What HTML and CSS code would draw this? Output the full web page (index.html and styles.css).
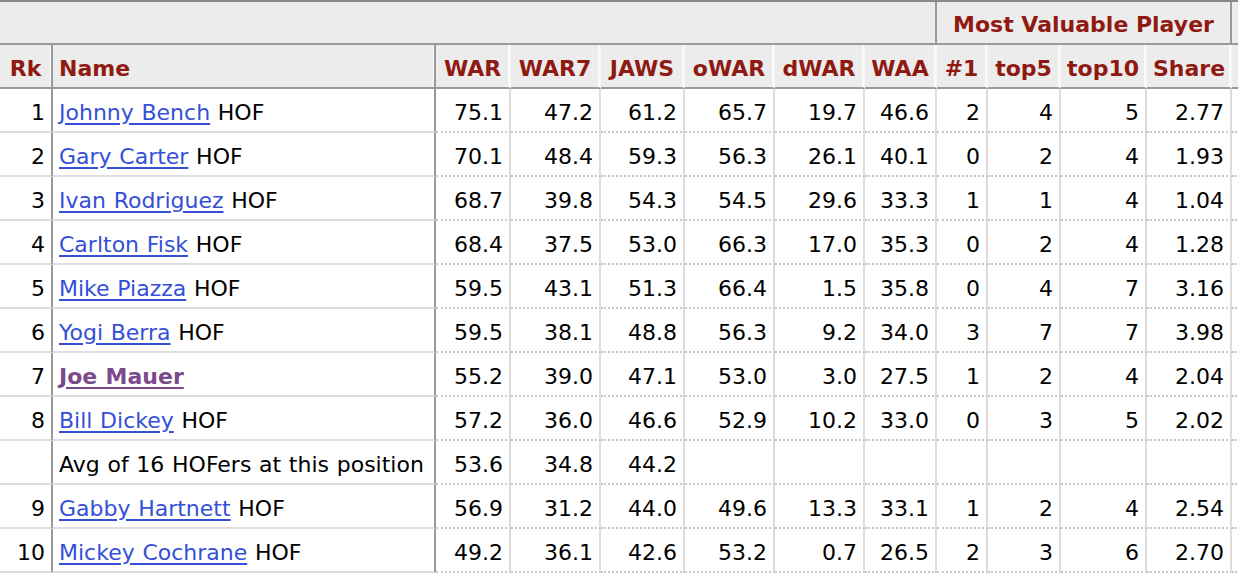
FILE: index.html
```html
<!DOCTYPE html>
<html lang="en">
<head>
<meta charset="utf-8">
<title>Catchers JAWS</title>
<link rel="stylesheet" href="styles.css">
</head>
<body>
<table class="stats">
  <colgroup>
    <col class="c-rk"><col class="c-name"><col class="c-war"><col class="c-war7"><col class="c-jaws"><col class="c-owar"><col class="c-dwar"><col class="c-waa"><col class="c-n1"><col class="c-top5"><col class="c-top10"><col class="c-share"><col class="c-more">
  </colgroup>
  <thead>
    <tr class="over">
      <th colspan="8" class="blank"></th>
      <th colspan="4" class="group">Most Valuable Player</th>
      <th class="tail"></th>
    </tr>
    <tr class="heads">
      <th class="left-sep">Rk</th>
      <th class="name left-sep">Name</th>
      <th>WAR</th>
      <th>WAR7</th>
      <th>JAWS</th>
      <th>oWAR</th>
      <th>dWAR</th>
      <th>WAA</th>
      <th>#1</th>
      <th>top5</th>
      <th>top10</th>
      <th>Share</th>
      <th class="tail"></th>
    </tr>
  </thead>
  <tbody>
    <tr><td class="rk">1</td><td class="player"><a href="#">Johnny Bench</a> HOF</td><td>75.1</td><td>47.2</td><td>61.2</td><td>65.7</td><td>19.7</td><td>46.6</td><td>2</td><td>4</td><td>5</td><td>2.77</td><td></td></tr>
    <tr><td class="rk">2</td><td class="player"><a href="#">Gary Carter</a> HOF</td><td>70.1</td><td>48.4</td><td>59.3</td><td>56.3</td><td>26.1</td><td>40.1</td><td>0</td><td>2</td><td>4</td><td>1.93</td><td></td></tr>
    <tr><td class="rk">3</td><td class="player"><a href="#">Ivan Rodriguez</a> HOF</td><td>68.7</td><td>39.8</td><td>54.3</td><td>54.5</td><td>29.6</td><td>33.3</td><td>1</td><td>1</td><td>4</td><td>1.04</td><td></td></tr>
    <tr><td class="rk">4</td><td class="player"><a href="#">Carlton Fisk</a> HOF</td><td>68.4</td><td>37.5</td><td>53.0</td><td>66.3</td><td>17.0</td><td>35.3</td><td>0</td><td>2</td><td>4</td><td>1.28</td><td></td></tr>
    <tr><td class="rk">5</td><td class="player"><a href="#">Mike Piazza</a> HOF</td><td>59.5</td><td>43.1</td><td>51.3</td><td>66.4</td><td>1.5</td><td>35.8</td><td>0</td><td>4</td><td>7</td><td>3.16</td><td></td></tr>
    <tr><td class="rk">6</td><td class="player"><a href="#">Yogi Berra</a> HOF</td><td>59.5</td><td>38.1</td><td>48.8</td><td>56.3</td><td>9.2</td><td>34.0</td><td>3</td><td>7</td><td>7</td><td>3.98</td><td></td></tr>
    <tr><td class="rk">7</td><td class="player"><a href="#" class="current">Joe Mauer</a></td><td>55.2</td><td>39.0</td><td>47.1</td><td>53.0</td><td>3.0</td><td>27.5</td><td>1</td><td>2</td><td>4</td><td>2.04</td><td></td></tr>
    <tr><td class="rk">8</td><td class="player"><a href="#">Bill Dickey</a> HOF</td><td>57.2</td><td>36.0</td><td>46.6</td><td>52.9</td><td>10.2</td><td>33.0</td><td>0</td><td>3</td><td>5</td><td>2.02</td><td></td></tr>
    <tr><td class="rk"></td><td class="player">Avg of 16 HOFers at this position</td><td>53.6</td><td>34.8</td><td>44.2</td><td></td><td></td><td></td><td></td><td></td><td></td><td></td><td></td></tr>
    <tr><td class="rk">9</td><td class="player"><a href="#">Gabby Hartnett</a> HOF</td><td>56.9</td><td>31.2</td><td>44.0</td><td>49.6</td><td>13.3</td><td>33.1</td><td>1</td><td>2</td><td>4</td><td>2.54</td><td></td></tr>
    <tr><td class="rk">10</td><td class="player"><a href="#">Mickey Cochrane</a> HOF</td><td>49.2</td><td>36.1</td><td>42.6</td><td>53.2</td><td>0.7</td><td>26.5</td><td>2</td><td>3</td><td>6</td><td>2.70</td><td></td></tr>
  </tbody>
</table>
</body>
</html>
```

FILE: styles.css
```css
html, body {
  margin: 0;
  padding: 0;
  overflow: hidden;
  background: #fff;
}

body {
  font-family: "DejaVu Sans", Verdana, sans-serif;
  font-size: 22px;
  color: #000;
}

.stats {
  border-collapse: separate;
  border-spacing: 0;
  table-layout: fixed;
  width: 1332px;
  border-top: 2px solid #888;
}

.c-rk { width: 53px; }
.c-name { width: 383px; }
.c-war { width: 75px; }
.c-war7 { width: 90px; }
.c-jaws { width: 84px; }
.c-owar { width: 90px; }
.c-dwar { width: 90px; }
.c-waa { width: 72px; }
.c-n1 { width: 51px; }
.c-top5 { width: 73px; }
.c-top10 { width: 86px; }
.c-share { width: 85px; }
.c-more { width: 100px; }

th, td {
  box-sizing: border-box;
  padding: 4px 6px 0;
  white-space: nowrap;
  overflow: hidden;
}

th {
  background: #ececec;
  color: #8f1a12;
  font-weight: bold;
  text-align: center;
  border-bottom: 2px solid #999;
}

.over th {
  height: 43px;
  border-right: 2px solid #999;
}

.heads th {
  height: 44px;
  border-right: 2px solid #f7f7f7;
  box-shadow: inset -1px 0 0 #fbfbfb;
}

.heads th.left-sep {
  border-right-color: #999;
}

.heads th.name {
  text-align: left;
}

td {
  height: 44px;
  text-align: right;
  border-right: 2px solid #ddd;
  border-bottom: 2px dotted #c8c8c8;
}

td.rk,
td.player {
  border-right-color: #999;
  border-bottom: 2px solid #ddd;
}

td.player {
  text-align: left;
  word-spacing: 0.7px;
}

a {
  color: #3450d8;
  text-decoration: underline;
  text-underline-offset: 3px;
}

a.current {
  color: #7a4a8c;
  font-weight: bold;
}
```
